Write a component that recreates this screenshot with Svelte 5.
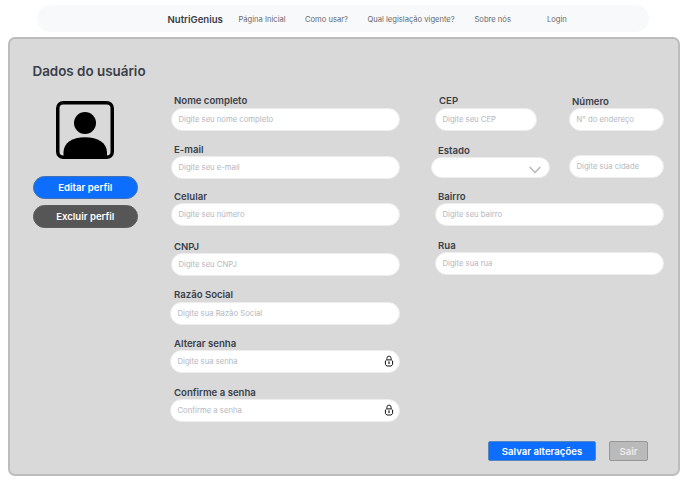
<script>
  const links = [
    { text: 'Página Inicial', left: 16, width: 48 },
    { text: 'Como usar?', left: 18.5, width: 43.5 },
    { text: 'Qual legislação vigente?', left: 19, width: 88 },
    { text: 'Sobre nós', left: 19, width: 37 },
    { text: 'Login', left: 35.5, width: 22 },
  ];
  const account = [
    { label: 'Nome completo', hint: 'Digite seu nome completo', before: 0, gap: 1 },
    { label: 'E-mail', hint: 'Digite seu e-mail', before: 13, gap: 0 },
    { label: 'Celular', hint: 'Digite seu número', before: 12, gap: 0 },
    { label: 'CNPJ', hint: 'Digite seu CNPJ', before: 15, gap: -0.5 },
    { label: 'Razão Social', hint: 'Digite sua Razão Social', before: 13.5, gap: 0.5, wide: true },
    { label: 'Alterar senha', hint: 'Digite sua senha', before: 13.5, gap: -0.3, wide: true, lock: true },
    { label: 'Confirme a senha', hint: 'Confirme a senha', before: 14, gap: 0, wide: true, lock: true },
  ];
  const street = [
    { label: 'Bairro', hint: 'Digite seu bairro', before: 0, gap: -0.5 },
    { label: 'Rua', hint: 'Digite sua rua', before: 14.5, gap: -0.5 },
  ];
</script>

{#snippet field(f)}
  <div class="field" class:wide={f.wide} style:margin-top="{f.before}px">
    <div class="label">{f.label}</div>
    <div class="input" style:margin-top="{f.gap}px">
      <span>{f.hint}</span>
      {#if f.lock}
        <svg class="lock" viewBox="0 0 10 12" width="10" height="12">
          <path d="M2.900 4.700V3.200a2.100 2.100 0 0 1 4.200 0V4.700" fill="none" stroke="#111" stroke-width=".9" />
          <path d="M2.600 4.900h4.800L8.600 6v3.400L7.200 11H2.800L1.400 9.400V6z" fill="none" stroke="#111" stroke-width="1" stroke-linejoin="round" />
          <path d="M5 6.600v2.400" stroke="#111" stroke-width="1.200" />
        </svg>
      {/if}
    </div>
  </div>
{/snippet}

<div class="page">
  <nav>
    <strong>NutriGenius</strong>
    {#each links as l}
      <a href="#top" style:margin-left="{l.left}px" style:width="{l.width}px">{l.text}</a>
    {/each}
  </nav>

  <main>
    <h1>Dados do usuário</h1>
    <div class="columns">
      <aside>
        <svg class="avatar" viewBox="0 0 58 58" width="58" height="58">
          <rect x="1.75" y="1.75" width="54.5" height="54.5" rx="5.5" fill="none" stroke="#000" stroke-width="3.5" />
          <circle cx="29" cy="22" r="11" />
          <path d="M7.500 56V51C8 42 16 36.300 29 36.300S50.500 42 51 51V56z" />
        </svg>
        <button class="edit">Editar perfil</button>
        <button class="delete">Excluir perfil</button>
      </aside>

      <section class="account">
        {#each account as f}{@render field(f)}{/each}
      </section>

      <section class="address">
        <div class="row first">
          <div class="cep">{@render field({ label: 'CEP', hint: 'Digite seu CEP', before: -0.5, gap: 1 })}</div>
          <div class="small">{@render field({ label: 'Número', hint: 'N° do endereço', before: 1.4, gap: -0.9 })}</div>
        </div>
        <div class="row second">
          <div class="state">
            <div class="label">Estado</div>
            <div class="select">
              <svg viewBox="0 0 12 8" width="12" height="8"><path d="M.7 1L6 6.500L11.300 1" fill="none" stroke="#b5b5b5" stroke-width="1.400" /></svg>
            </div>
          </div>
          <div class="input city"><span>Digite sua cidade</span></div>
        </div>
        <div class="street">
          {#each street as f}{@render field(f)}{/each}
        </div>
      </section>
    </div>
    <footer>
      <button class="save">Salvar alterações</button>
      <button class="exit">Sair</button>
    </footer>
  </main>
</div>

<style>
  .page {
    box-sizing: border-box;
    width: 687px;
    height: 490px;
    padding: 5px 0 0 8px;
    background: #fff;
    color: #3a4049;
    font-family: Inter, sans-serif;
    overflow: hidden;
  }
  nav {
    box-sizing: border-box;
    display: flex;
    align-items: center;
    width: 612px;
    height: 27px;
    margin-left: 29px;
    padding: 1px 0 0 130.500px;
    border-radius: 14px;
    background: #f8f9fb;
    white-space: nowrap;
  }
  nav strong {
    width: 55px;
    font-size: 9.600px;
    font-weight: 600;
  }
  nav a {
    color: #66696d;
    font-size: 7.600px;
    text-decoration: none;
  }
  main {
    box-sizing: border-box;
    display: flex;
    flex-direction: column;
    width: 672px;
    height: 439px;
    margin-top: 5px;
    border: 2px solid #bdbdbd;
    border-radius: 7px;
    background: #d9d9d9;
  }
  h1 {
    margin: 22px 0 0 22.500px;
    font-size: 13.400px;
    line-height: 20px;
    font-weight: 600;
  }
  .columns {
    display: flex;
    height: 330px;
    margin-top: 14px;
  }
  aside {
    display: flex;
    flex-direction: column;
    align-items: center;
    width: 105.500px;
    margin-left: 22.500px;
    padding-top: 5.600px;
  }
  .avatar {
    display: block;
  }
  button {
    box-sizing: border-box;
    padding: 0;
    color: #fff;
    font-family: inherit;
    font-size: 9.600px;
    font-weight: 600;
    white-space: nowrap;
  }
  .edit, .delete {
    width: 105.500px;
    height: 23.500px;
    border: 1px solid #4171b4;
    border-radius: 12px;
    background: #0d6efd;
  }
  .edit { margin-top: 17px; }
  .delete {
    margin-top: 5.500px;
    border-color: #5c5c5c;
    background: #565656;
  }
  .account {
    width: 229px;
    margin-left: 33px;
  }
  .label {
    height: 12px;
    padding-left: 3px;
    font-size: 9.600px;
    line-height: 12px;
    font-weight: 600;
    white-space: nowrap;
  }
  .input {
    box-sizing: border-box;
    display: flex;
    align-items: center;
    justify-content: space-between;
    height: 23px;
    padding: 0 5px 0 6.500px;
    border: 1px solid #ededed;
    border-radius: 12px;
    background: #fff;
    color: #b3b8c0;
    font-size: 7.700px;
    white-space: nowrap;
  }
  .wide .input { margin-left: -1px; }
  .lock { display: block; }
  .address {
    width: 233px;
    margin-left: 31px;
  }
  .row { display: flex; }
  .first {
    margin-left: 4px;
    justify-content: space-between;
  }
  .cep { width: 102px; }
  .cep :global(.label) { padding-left: 4px; }
  .small { width: 95px; }
  .second {
    align-items: flex-end;
    justify-content: space-between;
    margin-top: 14.200px;
  }
  .state { width: 119px; }
  .state .label { padding-left: 7px; }
  .select {
    box-sizing: border-box;
    display: flex;
    align-items: center;
    justify-content: flex-end;
    height: 21px;
    padding: 5px 8.500px 0 0;
    border: 1px solid #ededed;
    border-radius: 11px;
    background: #fff;
  }
  .city { width: 95px; }
  .street { margin: 13.500px 0 0 4px; }
  footer {
    display: flex;
    margin: 16px 0 0 478px;
  }
  .save, .exit {
    height: 20px;
    border: 1px solid #5687bc;
    border-radius: 2px;
    background: #0d6efd;
  }
  .save { width: 108px; }
  .exit {
    width: 39px;
    margin-left: 13px;
    border-color: #979797;
    background: #bababa;
    color: #ededed;
  }
</style>
